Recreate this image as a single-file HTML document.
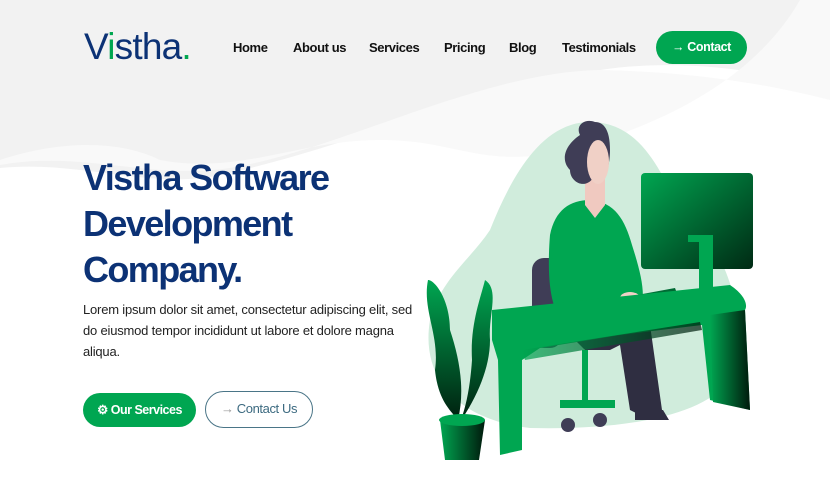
<!DOCTYPE html>
<html><head><meta charset="utf-8"><style>
*{margin:0;padding:0;box-sizing:border-box}
body{width:830px;height:498px;overflow:hidden;background:#fff;font-family:"Liberation Sans",sans-serif;position:relative}
.bg{position:absolute;left:0;top:0}
.logo{position:absolute;left:84px;top:26px;font-size:37px;color:#0c3275;letter-spacing:-0.8px;font-weight:normal}
.logo .g{color:#00a650}
.nav{position:absolute;top:40px;font-size:13px;font-weight:bold;color:#111;letter-spacing:-0.4px}
.cbtn{position:absolute;left:656px;top:31px;width:91px;height:33px;border-radius:17px;background:#00a651;color:#fff;font-size:12.5px;font-weight:bold;line-height:33px;text-align:center;letter-spacing:-0.4px}
h1{position:absolute;left:83px;top:155px;font-size:36px;line-height:46px;color:#0c3275;letter-spacing:-1.6px;font-weight:bold}
p{position:absolute;left:83px;top:299px;width:330px;font-size:13px;line-height:21px;color:#222;letter-spacing:-0.2px}
.b1{position:absolute;left:83px;top:393px;width:113px;height:34px;border-radius:17px;background:#00a651;color:#fff;font-size:12.5px;font-weight:bold;line-height:34px;text-align:center;letter-spacing:-0.5px}
.b2{position:absolute;left:205px;top:391px;width:108px;height:37px;border-radius:19px;border:1.5px solid #4a7587;color:#3c6a80;font-size:13px;line-height:34px;text-align:center;letter-spacing:-0.4px}
</style></head><body>
<svg class="bg" width="830" height="498">
<rect width="830" height="498" fill="#fff"/>
<path d="M0 0H830V88C760 70 680 58 600 70 480 88 340 150 220 175 150 190 80 160 0 168Z" fill="#f2f2f2"/>
<path d="M0 160C60 140 120 140 160 160 240 175 300 140 380 140 460 140 480 170 570 150 680 120 760 70 800 0H830V100C770 85 700 72 600 70 480 72 340 150 230 168 150 180 80 150 0 165Z" fill="#f9f9f9"/>
</svg>
<div class="logo">V<span class="g">i</span>stha<span class="g">.</span></div>
<div class="nav" style="left:233px">Home</div>
<div class="nav" style="left:293px">About us</div>
<div class="nav" style="left:369px">Services</div>
<div class="nav" style="left:444px">Pricing</div>
<div class="nav" style="left:509px">Blog</div>
<div class="nav" style="left:562px">Testimonials</div>
<div class="cbtn">→ Contact</div>
<h1>Vistha Software<br>Development<br>Company.</h1>
<p>Lorem ipsum dolor sit amet, consectetur adipiscing elit, sed do eiusmod tempor incididunt ut labore et dolore magna aliqua.</p>
<div class="b1">⚙ Our Services</div>
<div class="b2"><span style="color:#999">→</span> Contact Us</div>
<svg style="position:absolute;left:410px;top:110px" width="380" height="360" viewBox="0 0 380 360">
<defs>
<linearGradient id="g1" x1="0" y1="0" x2="1" y2="1"><stop offset="0" stop-color="#00a651"/><stop offset="1" stop-color="#002a14"/></linearGradient>
<linearGradient id="g2" x1="0" y1="0" x2="0" y2="1"><stop offset="0" stop-color="#00a651"/><stop offset="1" stop-color="#00200f"/></linearGradient>
<linearGradient id="g3" x1="0" y1="0" x2="1" y2="0"><stop offset="0" stop-color="#00a651"/><stop offset="1" stop-color="#001a0c"/></linearGradient>
</defs>
<path d="M80 120C100 70 130 12 180 12 230 12 250 60 270 100 320 140 340 210 320 270 290 310 200 320 120 318 50 310 10 270 20 210 30 170 60 150 80 120Z" fill="#d0ecdc"/>
<rect x="231" y="63" width="112" height="96" rx="4" fill="url(#g1)"/>
<path d="M278 125h25v70h-14v-63h-11z" fill="#00a651"/>
<rect x="122" y="148" width="30" height="90" rx="12" fill="#3f3d56"/>
<path d="M150 215L200 210 240 215 252 300 240 310 220 300 210 235 200 240 175 240Z" fill="#2f2e41"/>
<path d="M140 125C145 100 160 90 180 90 205 92 215 110 222 135 230 160 235 180 232 195L145 198C138 180 138 150 140 125Z" fill="#00a651"/>
<path d="M175 70V95L185 108 195 95V60Z" fill="#f0c9c0"/>
<path d="M170 25C165 15 175 8 185 12 195 12 200 22 200 40 200 60 193 75 183 68 175 80 160 72 160 60 150 50 155 35 170 25Z" fill="#3f3d56"/>
<ellipse cx="188" cy="52" rx="11" ry="22" fill="#f0d0c6"/>
<path d="M200 190L265 178 268 186 212 200Z" fill="url(#g1)"/>
<ellipse cx="188" cy="197" rx="12" ry="7" fill="#f0d0c6"/>
<ellipse cx="220" cy="188" rx="10" ry="6" fill="#f0d0c6"/>
<path d="M82 200L320 175C335 185 338 195 335 200L340 300 300 290 292 215 210 225 130 238 112 250 112 340 90 345 88 250 82 230Z" fill="#00a651"/>
<path d="M300 205 L335 200 340 300 303 292Z" fill="url(#g3)"/>
<path d="M112 240L290 212 292 220 115 250Z" fill="url(#g3)" opacity=".7"/>
<rect x="172" y="240" width="6" height="55" fill="#00a651"/>
<path d="M150 290h55v8h-55z" fill="#00a651"/>
<circle cx="158" cy="315" r="7" fill="#3f3d56"/><circle cx="190" cy="310" r="7" fill="#3f3d56"/>
<path d="M225 300h28l6 10h-34z" fill="#2f2e41"/>
<path d="M18 170C12 200 30 225 25 260 28 290 40 300 48 310 55 280 50 250 40 220 40 190 25 170 18 170Z" fill="url(#g2)"/>
<path d="M75 170C70 190 60 215 62 250 60 280 55 300 50 312 65 290 80 260 80 230 78 205 90 180 75 170Z" fill="url(#g2)"/>
<path d="M30 310h45l-6 40h-34z" fill="url(#g3)"/>
<ellipse cx="52" cy="310" rx="23" ry="6" fill="#00a651"/>
</svg>
</body></html>
